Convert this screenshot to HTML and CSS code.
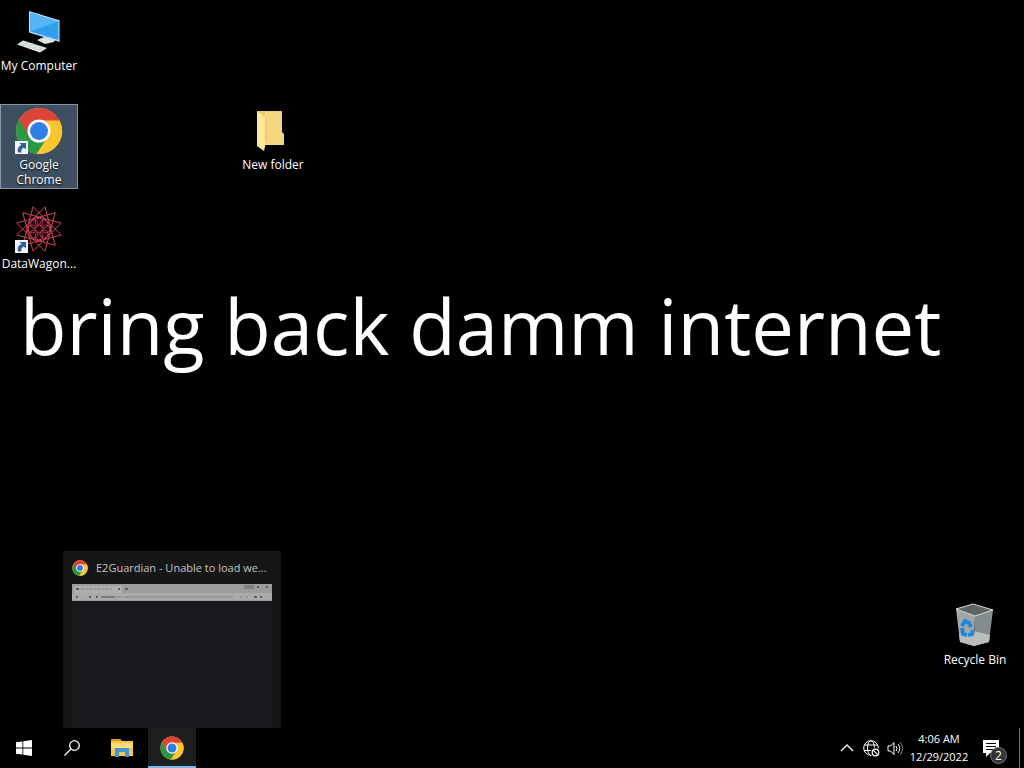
FILE: index.html
```html
<!DOCTYPE html>
<html lang="en">
<head>
<meta charset="utf-8">
<meta name="viewport" content="width=device-width, initial-scale=1">
<title>Desktop</title>
<link rel="stylesheet" href="styles.css">
</head>
<body>
<svg class="symbols" aria-hidden="true">
  <symbol id="chrome" viewBox="0 0 48 48">
    <circle cx="24" cy="24" r="23" fill="#fbc530"/>
    <path d="M24 24 4.1 12.5A23 23 0 0 0 21.5 46.9L34 29.8Z" fill="#2b9847"/>
    <path d="M4.1 12.5A23 23 0 0 1 45 14.4H24L14.2 29.8Z" fill="#dc4437"/>
    <path d="M24 13.5h20.6A23 23 0 0 1 21.5 46.9L33 29.5Z" fill="#fbc530"/>
    <circle cx="24" cy="24" r="11.5" fill="#fff"/>
    <circle cx="24" cy="24" r="9" fill="#2f7de8"/>
  </symbol>
  <symbol id="shortcut" viewBox="0 0 13 13">
    <path d="M0 0h13v13H0z" fill="#f3f5f8"/>
    <path d="M4.500 2H11v6.500L8.800 6.400C6.500 7.500 6 9 6.500 11.500H3C2 8 3.500 5.500 6.500 4Z" fill="#2e619c"/>
  </symbol>
</svg>

<main class="desktop">
  <h1 class="wallpaper-text">bring back damm internet</h1>

  <button class="icon computer" type="button">
    <svg class="art" viewBox="0 0 48 48" aria-hidden="true">
      <path d="M14 3 45 12.500v21.500L14 24.500Z" fill="#b8e4fa"/>
      <path d="M15 4.500 43.500 13.500v18.500L15 23.500Z" fill="#2f9fe9"/>
      <path d="M15 4.500 43.500 13.500 15 23.500Z" fill="#51b6f3"/>
      <path d="M44.500 12.500v21" stroke="#687b87"/>
      <path d="m30 29 7 2v3l-7-2Z" fill="#9eabb2"/>
      <path d="m22 32 7-3 11 3-1 2-9 2Z" fill="#dce2e5"/>
      <path d="m8 32.500 24 7.500-7 4.500L2 36.500Z" fill="#e8ecee"/>
      <path d="m6 34 23 7M4 35.500l23 7M13 34l-6 4M18 35.500 12 40M23 37l-6 4.500M28 38.500 22 43" stroke="#b4bcc1" stroke-width=".6"/>
    </svg>
    <span class="label">My Computer</span>
  </button>

  <button class="icon chrome selected" type="button">
    <span class="art">
      <svg class="picture" aria-hidden="true"><use href="#chrome"/></svg>
      <svg class="arrow" aria-hidden="true"><use href="#shortcut"/></svg>
    </span>
    <span class="label">Google Chrome</span>
  </button>

  <button class="icon datawagon" type="button">
    <span class="art">
      <svg class="picture" viewBox="-24 -23 48 48" fill="none" stroke="#d24458" aria-hidden="true">
        <defs>
          <path id="star" d="M0-23 20-11.500 20 11.500 0 23-20 11.500-20-11.500Z"/>
          <path id="points" d="M0-23 19.900 11.500-19.900 11.500ZM0 23 19.900-11.500-19.900-11.500ZM-23 0 11.500-19.900 11.500 19.900ZM23 0-11.500-19.900-11.500 19.900Z"/>
          <g id="rings"><circle cy="-7" r="4"/><circle cx="7" r="4"/><circle cy="7" r="4"/><circle cx="-7" r="4"/></g>
        </defs>
        <use href="#points" stroke-width=".9" transform="rotate(15)"/>
        <circle r="11" fill="#1c060c" stroke="none"/>
        <use href="#rings" stroke-width=".8"/>
        <use href="#rings" stroke-width=".8" transform="rotate(45)"/>
        <circle r="11" stroke-width=".7" stroke-dasharray="3 2"/>
        <circle r="2.500" fill="#100205" stroke="none"/>
      </svg>
      <svg class="arrow" aria-hidden="true"><use href="#shortcut"/></svg>
    </span>
    <span class="label">DataWagon...</span>
  </button>

  <button class="icon folder" type="button">
    <svg class="art" viewBox="0 0 48 48" aria-hidden="true">
      <path d="M8 4h25v21l2 2v11H15L8 30Z" fill="#edcb67"/>
      <path d="M16 5h17v21l2 2v10H16Z" fill="#f3d67e"/>
      <path d="M8 4 17 11v24l-2 9-7-5Z" fill="#ffe79d"/>
      <path d="M17 11v23" stroke="#dbb95b"/>
    </svg>
    <span class="label">New folder</span>
  </button>

  <button class="icon bin" type="button">
    <svg class="art" viewBox="0 0 48 48" aria-hidden="true">
      <path d="m5 7 19 7-1 30-14-4Z" fill="#a2a8aa"/>
      <path d="m24 14 18-6-4 32-15 4Z" fill="#858c8e"/>
      <path d="m8 32 15-3 16 4-1 7-15 4-14-4Z" fill="#b9bdbe"/>
      <path d="M5 7 22 2l20 6-18 6Z" fill="#5f6465" stroke="#d9dddd"/>
      <g fill="none" stroke="#2187d4" stroke-width="4"><path d="m11 24 3-5 4 2 2 4"/><path d="m11 26 1 6 4 1"/><path d="m17 33 4-1 1-4"/></g>
    </svg>
    <span class="label">Recycle Bin</span>
  </button>

  <section class="preview">
    <header class="preview-head">
      <svg class="preview-icon" aria-hidden="true"><use href="#chrome"/></svg>
      <span class="preview-title">E2Guardian - Unable to load we...</span>
    </header>
    <div class="thumb">
      <svg class="thumb-bar" viewBox="0 0 200 17" preserveAspectRatio="none" aria-hidden="true">
        <path d="M0 0h200v17H0z" fill="#9c9c9c"/>
        <path d="M0 9h200v7H0z" fill="#aaa"/>
        <path d="M2 2h48v7H2z" fill="#b0b0b0"/>
        <path d="M172 1h10v4h-10z" fill="#808080"/>
        <path d="M4 5h3M46 5h2M53 5h3M185 3h2M194 3h2M4 13h2M17 13h2M24 13h2M182 13h3M188 13h2" stroke="#5c5c5c" stroke-width="2"/>
        <path d="M9 5h32M29 13h132M168 13h3M174 13h2" stroke="#808080" stroke-dasharray="4 1 2 1"/>
        <path d="M29 13h14" stroke="#5c5c5c"/>
      </svg>
    </div>
  </section>
</main>

<footer class="taskbar">
  <nav class="apps" aria-label="Taskbar">
    <button class="task" type="button" aria-label="Start">
      <svg width="16" height="16" viewBox="0 0 16 16" fill="#fff" aria-hidden="true"><path d="M0 2.300 6.500 1.400v6.100H0ZM7.300 1.300 16 0v7.500H7.300ZM0 8.400h6.500v6.200L0 13.700ZM7.300 8.400H16V16l-8.700-1.300Z"/></svg>
    </button>
    <button class="task" type="button" aria-label="Search">
      <svg width="16" height="16" viewBox="0 0 16 16" fill="none" stroke="#fff" stroke-width="1.300" aria-hidden="true"><circle cx="10.500" cy="5.500" r="4.800"/><path d="M7 9 .5 15.500"/></svg>
    </button>
    <button class="task wide" type="button" aria-label="File Explorer">
      <svg width="22" height="18" viewBox="0 0 22 18" aria-hidden="true"><path d="M0 0h9l2 2h11v15H0Z" fill="#f3c74e"/><path d="M0 0h9l1 2H0Z" fill="#d79b25"/><path d="M0 4h22v5H0Z" fill="#ffdc76"/><path d="M4 9h14v9h-4v-5H8v5H4Z" fill="#4795cf"/></svg>
    </button>
    <button class="task active" type="button" aria-label="Google Chrome">
      <svg width="24" height="24" aria-hidden="true"><use href="#chrome"/></svg>
    </button>
  </nav>
  <div class="tray">
    <button class="tray-button" type="button" aria-label="Show hidden icons">
      <svg width="14" height="8" viewBox="0 0 14 8" fill="none" stroke="#fff" stroke-width="1.300" aria-hidden="true"><path d="m1 7 6-6 6 6"/></svg>
    </button>
    <button class="tray-button" type="button" aria-label="No internet">
      <svg width="17" height="17" viewBox="0 0 17 17" fill="none" stroke="#fff" aria-hidden="true"><circle cx="8" cy="8" r="7.300"/><ellipse cx="8" cy="8" rx="3.500" ry="7.300"/><path d="M1.500 5h13M1 10.500h14"/><circle cx="12.500" cy="12.500" r="5" fill="#000" stroke="none"/><circle cx="12.500" cy="12.500" r="3.300" stroke-width="1.200"/><path d="m10.300 10.300 4.400 4.400" stroke-width="1.200"/></svg>
    </button>
    <button class="tray-button" type="button" aria-label="Volume">
      <svg width="17" height="15" viewBox="0 0 17 15" fill="none" stroke="#fff" aria-hidden="true"><path d="M1 5h2.500L7 1.500v12L3.500 10H1Z"/><path d="M9 5q2 2.500 0 5M11 3q3.500 4.500 0 9"/><path d="M13 1q5 6.500 0 13" stroke="#888"/></svg>
    </button>
    <button class="clock" type="button"><span>4:06 AM</span><span>12/29/2022</span></button>
    <button class="notices" type="button" aria-label="Notifications, 2 new">
      <svg width="17" height="17" viewBox="0 0 17 17" aria-hidden="true"><path d="M0 0h16v13H7l-4 4v-4H0Z" fill="#fff"/><path d="M3 3.500h10M3 6.500h10M3 9.500h7" stroke="#000"/></svg>
      <span class="badge">2</span>
    </button>
    <button class="show-desktop" type="button" aria-label="Show desktop"></button>
  </div>
</footer>
</body>
</html>
```
FILE: styles.css
```css
* { box-sizing: border-box; }

body {
  margin: 0;
  min-height: 100vh;
  display: flex;
  flex-direction: column;
  background: #000;
  color: #fff;
  font-family: "Open Sans", "Noto Sans", sans-serif;
  font-size: 12px;
  overflow: hidden;
}

button {
  border: 0;
  padding: 0;
  background: none;
  color: inherit;
  font: inherit;
}

.symbols { position: absolute; width: 0; height: 0; }

.desktop { position: relative; flex: 1; }

.wallpaper-text {
  position: absolute;
  left: 20px;
  top: 272px;
  margin: 0;
  font-size: 76px;
  line-height: 108px;
  font-weight: 400;
  white-space: nowrap;
}

/* Desktop items sit at free positions on the canvas */
.icon {
  position: absolute;
  width: 78px;
  display: flex;
  flex-direction: column;
  align-items: center;
  gap: 2px;
  padding: 2px 0 1px;
  border: 1px solid transparent;
  line-height: 15px;
}
.computer { left: 0; top: 5px; }
.chrome { left: 0; top: 104px; }
.datawagon { left: 0; top: 203px; }
.folder { left: 234px; top: 104px; }
.bin { left: 936px; top: 599px; }

.selected { background: #3d4f60; border-color: #8796a3; }
.art { position: relative; width: 48px; height: 48px; }
.picture { width: 48px; height: 48px; }
.arrow {
  position: absolute;
  left: 0;
  bottom: 1px;
  width: 13px;
  height: 13px;
}
.label { text-shadow: 0 1px 2px #000; white-space: nowrap; }
.selected .label { width: 60px; white-space: normal; }

.preview {
  position: absolute;
  left: 63px;
  bottom: 0;
  width: 218px;
  height: 177px;
  display: flex;
  flex-direction: column;
  padding: 0 9px;
  background: #161617;
}
.preview-head {
  display: flex;
  align-items: center;
  gap: 8px;
  height: 33px;
  color: #c4c4c4;
}
.preview-icon { flex: none; width: 16px; height: 16px; }
.preview-title { font-size: 11px; white-space: nowrap; }
.thumb { flex: 1; background: #17191d; }
.thumb-bar { display: block; width: 100%; height: 17px; }

.taskbar {
  display: flex;
  justify-content: space-between;
  height: 40px;
}
.apps, .tray { display: flex; align-items: stretch; }
.task {
  display: flex;
  align-items: center;
  justify-content: center;
  width: 48px;
}
.task.wide { width: 52px; }
.task.active { background: #1d1e20; box-shadow: inset 0 -2px #76b9ed; }

.tray-button {
  display: flex;
  align-items: center;
  justify-content: center;
  width: 24px;
}
.clock {
  display: flex;
  flex-direction: column;
  justify-content: center;
  width: 64px;
  font-size: 11px;
  line-height: 18px;
  text-align: center;
}
.notices {
  position: relative;
  display: flex;
  align-items: center;
  padding-left: 12px;
  width: 48px;
}
.badge {
  position: absolute;
  right: 12px;
  bottom: 4px;
  width: 17px;
  height: 17px;
  border: 1px solid #777;
  border-radius: 50%;
  background: #333;
  line-height: 15px;
  text-align: center;
}
.show-desktop { width: 5px; border-left: 1px solid #777; }
```
